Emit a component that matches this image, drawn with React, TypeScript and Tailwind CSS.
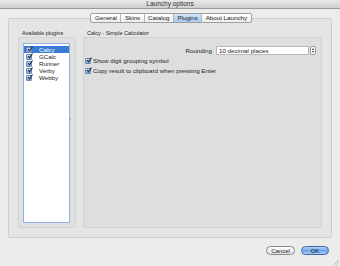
import React from 'react';

const plugins = ['Calcy', 'GCalc', 'Runner', 'Verby', 'Webby'];
const tabs = ['General', 'Skins', 'Catalog', 'Plugins', 'About Launchy'];

const Check = () => (
  <span className="relative inline-block w-[6px] h-[6px] shrink-0 rounded-[1px] border border-[#6d88b0] bg-gradient-to-b from-[#cfe1f7] to-[#7fa8dc]">
    <svg viewBox="0 0 6 6" className="absolute left-[0px] top-[-2px] w-[6px] h-[6px]">
      <path d="M1 3 L2.5 4.8 L5.5 0.5" stroke="#1b2a44" strokeWidth="1.1" fill="none" />
    </svg>
  </span>
);

const App: React.FC = () => {
  return (
    <div
      className="w-[340px] h-[266px] bg-[#ececec] flex flex-col text-[6.2px] text-[#222] overflow-hidden"
      style={{ fontFamily: '"Liberation Sans", Arial, sans-serif' }}
    >
      {/* Title bar */}
      <div className="h-[9px] shrink-0 flex items-center justify-center bg-gradient-to-b from-[#e9e9e9] to-[#cfcfcf] border-b border-[#9a9a9a] text-[6.5px] text-[#333]">
        Launchy options
      </div>

      {/* Tabs */}
      <div className="mt-[4px] flex justify-center relative z-10 -mb-[5px] pl-[2px]">
        <div className="flex h-[10px] border border-[#9f9f9f] rounded-[2px] bg-gradient-to-b from-[#ffffff] to-[#ececec] overflow-hidden">
          {tabs.map((t, i) => (
            <div
              key={t}
              className={`flex items-center px-[3.5px] ${i > 0 ? 'border-l border-[#b5b5b5]' : ''} ${
                t === 'Plugins' ? 'bg-gradient-to-b from-[#d3e5f8] to-[#a6c8ee]' : ''
              }`}
            >
              {t}
            </div>
          ))}
        </div>
      </div>

      {/* Tab pane */}
      <div className="mx-[8px] h-[220px] border border-[#cdcdcd] rounded-[2px] bg-[#e5e5e5] flex gap-[7px] px-[9px] pt-[11px] pb-[9px]">
        {/* Available plugins */}
        <div className="w-[58px] flex flex-col">
          <div className="h-[7px] pl-[4px] leading-[6px] text-[5.5px]">Available plugins</div>
          <div className="flex-1 border border-[#d3d3d3] rounded-[2px] bg-[#e0e0e0] pt-[5px] pl-[4px] pr-[5px] pb-[4px]">
            <div className="relative h-full bg-white border border-[#8cb1e2] pt-[2px]">
              {plugins.map((p, i) => (
                <div
                  key={p}
                  className={`h-[7px] flex items-center gap-[7px] pl-[2px] ${i === 0 ? 'bg-[#3a7bd5] text-white' : ''}`}
                >
                  <Check />
                  <span>{p}</span>
                </div>
              ))}
              <span className="absolute right-[-2px] top-[74px] w-[2px] h-[2px] rounded-full bg-[#9aa4b0]" />
            </div>
          </div>
        </div>

        {/* Plugin options */}
        <div className="flex-1 flex flex-col">
          <div className="h-[7px] pl-[4px] leading-[6px] text-[5.5px]">Calcy - Simple Calculator</div>
          <div className="flex-1 border border-[#d3d3d3] rounded-[2px] bg-[#dedede] pt-[8px] pl-[1px] pr-[5px]">
            <div className="flex items-center justify-end h-[9px]">
              <span className="mr-[4px]">Rounding</span>
              <div className="w-[93px] h-[9px] bg-white border border-[#b8b8b8] flex items-center pl-[2px]">
                10 decimal places
              </div>
              <div className="ml-[1px] w-[6px] h-[9px] border border-[#9a9a9a] rounded-[2px] bg-white flex flex-col items-center justify-center gap-[1px]">
                <span className="w-0 h-0 border-l-[1.5px] border-r-[1.5px] border-b-[2px] border-l-transparent border-r-transparent border-b-[#333]" />
                <span className="w-0 h-0 border-l-[1.5px] border-r-[1.5px] border-t-[2px] border-l-transparent border-r-transparent border-t-[#333]" />
              </div>
            </div>
            <div className="mt-[2px] flex flex-col gap-[2px]">
              <div className="flex items-center gap-[2px] h-[8px]">
                <Check />
                <span>Show digit grouping symbol</span>
              </div>
              <div className="flex items-center gap-[2px] h-[8px]">
                <Check />
                <span>Copy result to clipboard when pressing Enter</span>
              </div>
            </div>
          </div>
        </div>
      </div>

      {/* Buttons */}
      <div className="relative flex-1 flex justify-end items-start pt-[8px] pr-[11px] gap-[6px]">
        <button className="w-[29px] h-[9px] rounded-full border border-[#8a8a8a] bg-gradient-to-b from-[#ffffff] to-[#e2e2e2] text-[6px] leading-none text-[#222]">
          Cancel
        </button>
        <button className="w-[28px] h-[9px] rounded-full border border-[#3d67a8] bg-gradient-to-b from-[#b9d6f7] via-[#6fa6ea] to-[#a6cdf6] text-[6px] leading-none text-[#111]">
          OK
        </button>
        <svg viewBox="0 0 6 6" className="absolute right-[1px] bottom-[1px] w-[6px] h-[6px]">
          <path d="M1 6 L6 1 M3.5 6 L6 3.5" stroke="#a0a0a0" strokeWidth="0.7" />
        </svg>
      </div>
    </div>
  );
};

export default App;
